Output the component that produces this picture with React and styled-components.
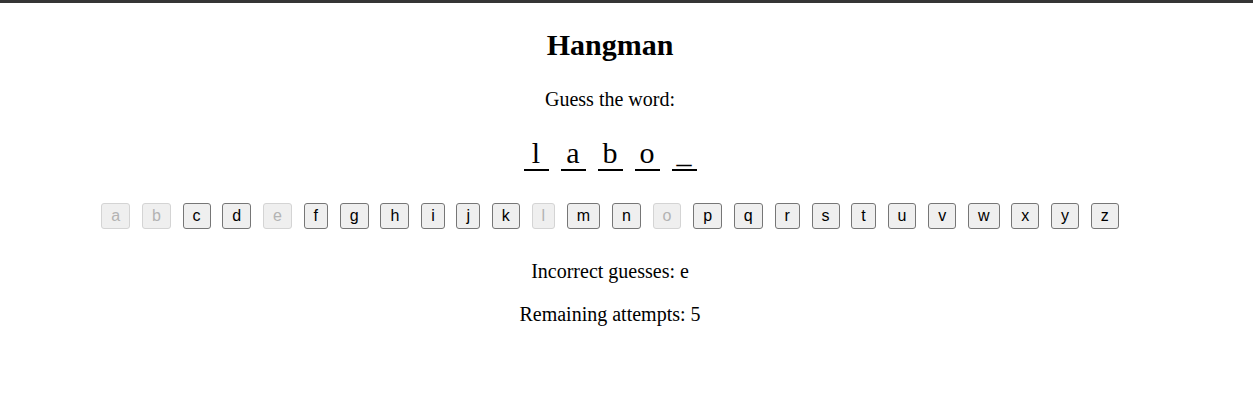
import styled, { createGlobalStyle } from 'styled-components'

const word = ['l', 'a', 'b', 'o', '_']
const guessed = ['a', 'b', 'e', 'l', 'o']
const letters = 'abcdefghijklmnopqrstuvwxyz'.split('')

const Global = createGlobalStyle`
    body {
        margin: 0;
        border-top: 3px solid #353535;
        background: #fff;
        font-family: "Liberation Serif", "Times New Roman", serif;
    }
`

const Game = styled.div`
    width: 1220px;
    text-align: center;
    font-size: 20px;
    color: #000;
`

const Title = styled.h1`
    font-size: 30px;
    font-weight: bold;
    margin: 25px 0 26px;
`

const Text = styled.p`
    margin: 20px 0;
`

const Word = styled.div`
    display: flex;
    justify-content: center;
    gap: 12px;
    margin: 26px 0 32px;
`

const Slot = styled.span`
    display: inline-block;
    width: 25px;
    font-size: 30px;
    line-height: 32px;
    border-bottom: 2px solid #000;
`

const Keys = styled.div`
    display: flex;
    justify-content: center;
    gap: 11.75px;
    margin-bottom: 31px;
`

const Key = styled.button`
    font-family: "Liberation Sans", Arial, sans-serif;
    font-size: 16px;
    line-height: 18px;
    padding: 3px 9px;
    border-radius: 3px;
    border: 1px solid ${p => p.disabled ? '#d4d4d4' : '#767676'};
    background: #efefef;
    color: ${p => p.disabled ? '#b3b3b3' : '#000'};
`

function App() {
    return (
        <>
            <Global />
            <Game>
                <Title>Hangman</Title>
                <Text>Guess the word:</Text>
                <Word>
                    {word.map((v, i) => <Slot key={i}>{v}</Slot>)}
                </Word>
                <Keys>
                    {letters.map(v => (
                        <Key key={v} disabled={guessed.includes(v)}>{v}</Key>
                    ))}
                </Keys>
                <Text>Incorrect guesses: e</Text>
                <Text>Remaining attempts: 5</Text>
            </Game>
        </>
    )
}

export default App
